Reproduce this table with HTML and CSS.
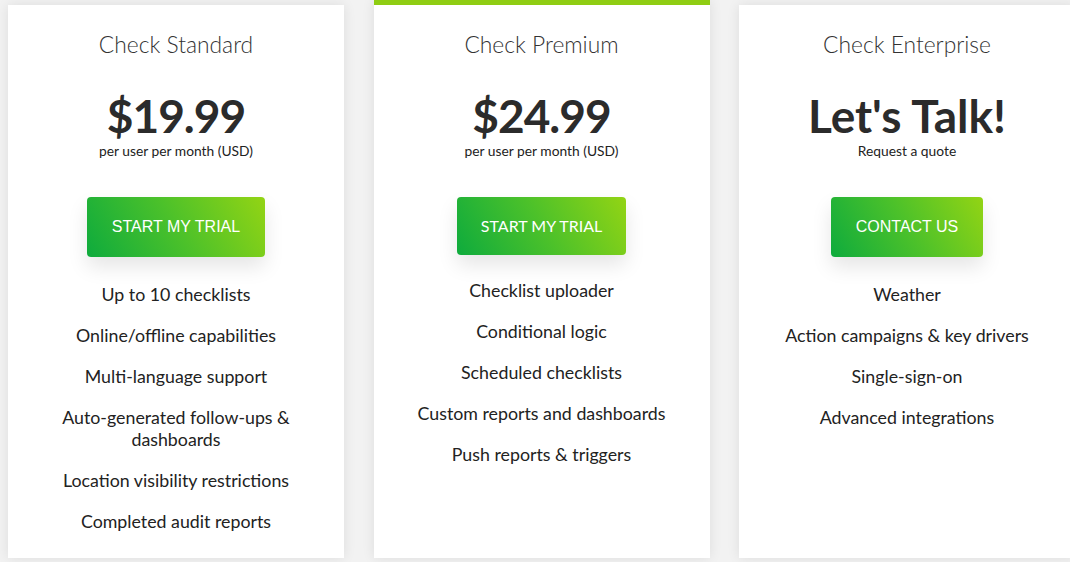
FILE: index.html
```html
<!DOCTYPE html>
<html>
<head>
<meta charset="utf-8">
<link rel="stylesheet" href="styles.css">
</head>
<body>
<div class="plans">
  <section class="card">
    <h2 class="title">Check Standard</h2>
    <div class="price price-num">$19.99</div>
    <div class="note">per user per month (USD)</div>
    <a class="btn btn-arial">START MY TRIAL</a>
    <ul class="features">
      <li>Up to 10 checklists</li>
      <li>Online/offline capabilities</li>
      <li>Multi-language support</li>
      <li>Auto-generated follow-ups &amp; dashboards</li>
      <li>Location visibility restrictions</li>
      <li>Completed audit reports</li>
    </ul>
  </section>
  <section class="card card-featured">
    <h2 class="title">Check Premium</h2>
    <div class="price price-num">$24.99</div>
    <div class="note">per user per month (USD)</div>
    <a class="btn btn-lato">START MY TRIAL</a>
    <ul class="features features-tight">
      <li>Checklist uploader</li>
      <li>Conditional logic</li>
      <li>Scheduled checklists</li>
      <li>Custom reports and dashboards</li>
      <li>Push reports &amp; triggers</li>
    </ul>
  </section>
  <section class="card">
    <h2 class="title">Check Enterprise</h2>
    <div class="price">Let's Talk!</div>
    <div class="note">Request a quote</div>
    <a class="btn btn-arial">CONTACT US</a>
    <ul class="features">
      <li>Weather</li>
      <li>Action campaigns &amp; key drivers</li>
      <li>Single-sign-on</li>
      <li>Advanced integrations</li>
    </ul>
  </section>
</div>
</body>
</html>
```

FILE: styles.css
```css
html, body {
  margin: 0;
  padding: 0;
}
body {
  background: #f2f2f2;
  font-family: Lato, "Open Sans", sans-serif;
  color: #222;
  overflow: hidden;
  width: 1070px;
  height: 562px;
}
.plans {
  display: grid;
  grid-template-columns: 336px 336px 336px;
  column-gap: 29.5px;
  padding: 5px 0 0 8px;
  align-items: stretch;
}
.card {
  background: #fff;
  box-shadow: 0 0 12px rgba(0, 0, 0, 0.09);
  padding: 25.5px 28px 25px;
  display: flex;
  flex-direction: column;
  align-items: center;
  text-align: center;
  height: 553px;
  box-sizing: border-box;
}
.card-featured {
  border-top: 5px solid #8fcd13;
  margin-top: -5px;
  height: 558px;
}
.title {
  margin: 0;
  font-size: 22.8px;
  line-height: 26px;
  font-weight: 300;
  color: #333;
}
.price {
  margin-top: 34px;
  font-size: 46px;
  line-height: 50px;
  font-weight: 700;
  color: #2b2b2b;
}
.price-num {
  letter-spacing: -1px;
}
.note {
  margin-top: 1px;
  font-size: 13.8px;
  line-height: 18px;
  color: #222;
}
.btn {
  margin-top: 37px;
  display: flex;
  align-items: center;
  justify-content: center;
  height: 60px;
  padding: 0 25px;
  box-sizing: border-box;
  border-radius: 4px;
  color: #fff;
  background: linear-gradient(60deg, #0eab3d 0%, #4cc12a 50%, #93d414 100%);
  box-shadow: 0 10px 20px rgba(0, 0, 0, 0.10);
}
.btn-arial {
  font-family: "Liberation Sans", Arial, sans-serif;
  font-size: 16px;
}
.btn-lato {
  font-family: Lato, sans-serif;
  font-size: 16px;
  height: 58px;
  padding: 0 24px;
}
.features {
  list-style: none;
  margin: 26px 0 0;
  padding: 0;
  font-size: 17.8px;
  line-height: 22px;
  color: #222;
}
.features li + li {
  margin-top: 19px;
}
.features-tight {
  margin-top: 24px;
}
```
